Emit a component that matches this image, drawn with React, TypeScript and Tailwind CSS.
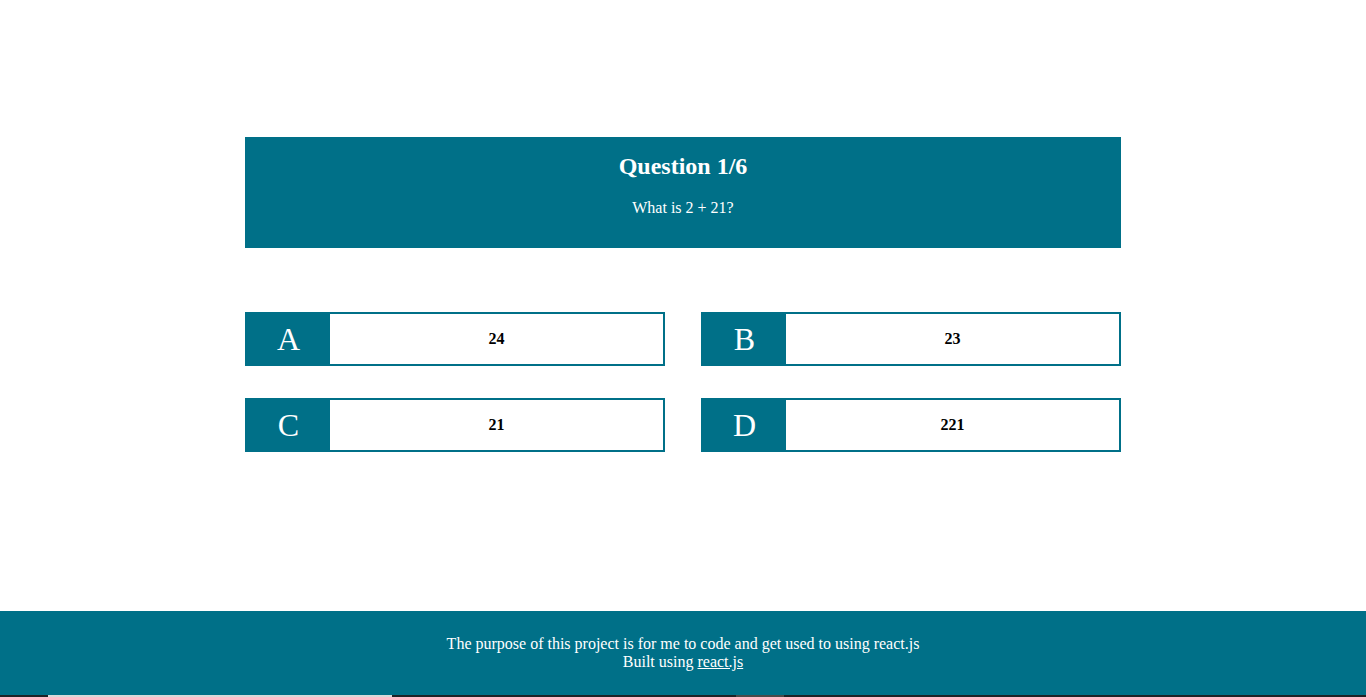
import React from "react";

const answers = [
  { letter: "A", text: "24" },
  { letter: "B", text: "23" },
  { letter: "C", text: "21" },
  { letter: "D", text: "221" },
];

const App = () => {
  return (
    <div className="flex h-[697px] flex-col bg-white font-['Liberation_Serif',serif] text-black">
      <main className="flex-1 pt-[137px]">
        {/* Question card */}
        <div className="mx-auto flex h-[111px] w-[876px] flex-col items-center bg-[#007088] pt-[15px] text-white">
          <h2 className="text-[24px] font-bold leading-[28px]">Question 1/6</h2>
          <p className="mt-[19px] text-[16px] leading-[18px]">What is 2 + 21?</p>
        </div>

        {/* Answers */}
        <div className="mx-auto mt-[64px] grid w-[876px] grid-cols-2 gap-x-[36px] gap-y-[32px]">
          {answers.map((a) => (
            <button
              key={a.letter}
              className="flex h-[54px] items-stretch border-2 border-[#007088] bg-white"
            >
              <span className="flex w-[83px] items-center justify-center bg-[#007088] pb-[1px] text-[32px] leading-none text-white">
                {a.letter}
              </span>
              <span className="flex flex-1 items-center justify-center text-[16px] font-bold">
                {a.text}
              </span>
            </button>
          ))}
        </div>
      </main>

      <footer className="flex h-[84px] flex-col items-center justify-center bg-[#007088] text-[16px] leading-[18px] text-white">
        <p>The purpose of this project is for me to code and get used to using react.js</p>
        <p>
          Built using <a href="#" className="underline">react.js</a>
        </p>
      </footer>
      <div className="flex h-[2px] bg-[#1e2226]">
        <div className="w-[48px]" />
        <div className="w-[344px] bg-[#d9d9d9]" />
        <div className="w-[344px]" />
        <div className="w-[48px] bg-[#4a4a4a]" />
      </div>
    </div>
  );
};

export default App;
